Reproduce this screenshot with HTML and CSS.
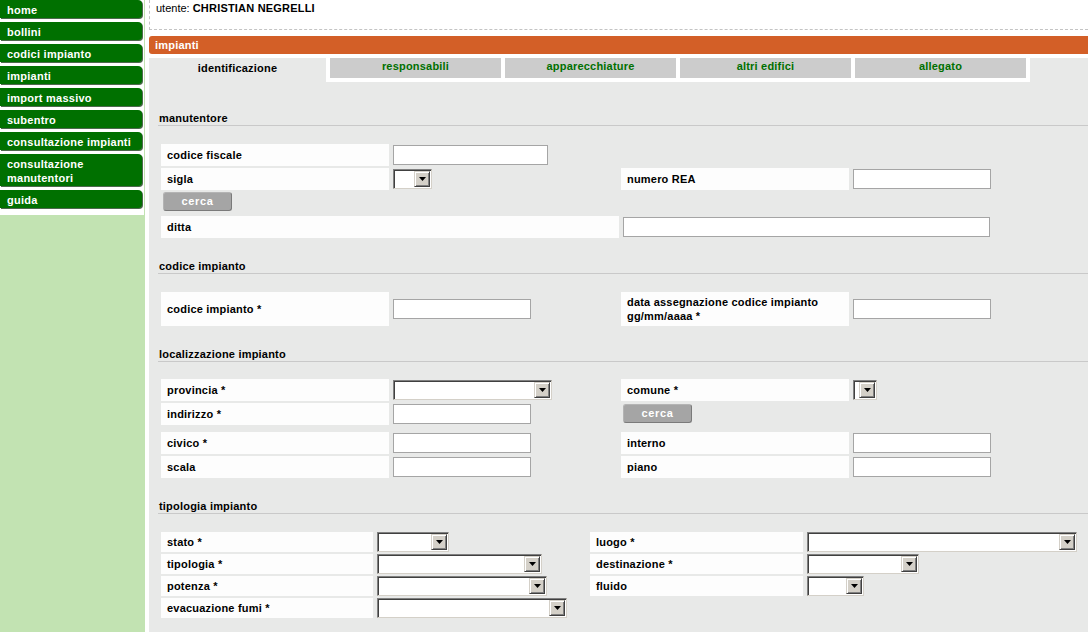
FILE: index.html
```html
<!DOCTYPE html>
<html lang="it">
<head>
<meta charset="utf-8">
<title>impianti</title>
<link rel="stylesheet" href="styles.css">
</head>
<body>
<div class="page">
  <aside class="sidebar">
    <nav class="menu">
      <a class="menu-item" href="#">home</a>
      <a class="menu-item" href="#">bollini</a>
      <a class="menu-item" href="#">codici impianto</a>
      <a class="menu-item" href="#">impianti</a>
      <a class="menu-item" href="#">import massivo</a>
      <a class="menu-item" href="#">subentro</a>
      <a class="menu-item" href="#">consultazione impianti</a>
      <a class="menu-item" href="#">consultazione<br>manutentori</a>
      <a class="menu-item" href="#">guida</a>
    </nav>
  </aside>

  <main class="main">
    <div class="user">utente: <b>CHRISTIAN NEGRELLI</b></div>
    <div class="titlebar">impianti</div>
    <div class="tabbar">
      <div class="tabs">
        <div class="tab tab-active">identificazione</div>
        <div class="tab">responsabili</div>
        <div class="tab">apparecchiature</div>
        <div class="tab">altri edifici</div>
        <div class="tab">allegato</div>
      </div>
    </div>

    <div class="content">
      <section class="section">
        <h3 class="sec-title">manutentore</h3>
        <div class="grid">
          <div class="lbl">codice fiscale</div>
          <div class="val"><input class="field w155" type="text"></div>
          <div></div><div></div>

          <div class="lbl">sigla</div>
          <div class="val"><span class="sel w39"><span class="sel-btn"><svg width="7" height="4" viewBox="0 0 7 4"><polygon points="0,0 7,0 3.5,4" fill="#000"/></svg></span></span></div>
          <div class="lbl">numero REA</div>
          <div class="val"><input class="field w138" type="text"></div>

          <div class="val val-top"><button class="btn" type="button">cerca</button></div>
          <div></div><div></div><div></div>

          <div class="lbl span2">ditta</div>
          <div class="val span2"><input class="field w367" type="text"></div>
        </div>
      </section>

      <section class="section">
        <h3 class="sec-title">codice impianto</h3>
        <div class="grid">
          <div class="lbl lbl-tall">codice impianto *</div>
          <div class="val val-mid"><input class="field w138" type="text"></div>
          <div class="lbl lbl-tall">data assegnazione codice impianto<br>gg/mm/aaaa *</div>
          <div class="val val-mid"><input class="field w138" type="text"></div>
        </div>
      </section>

      <section class="section">
        <h3 class="sec-title sec-title-tight">localizzazione impianto</h3>
        <div class="grid">
          <div class="lbl">provincia *</div>
          <div class="val"><span class="sel w159"><span class="sel-btn"><svg width="7" height="4" viewBox="0 0 7 4"><polygon points="0,0 7,0 3.5,4" fill="#000"/></svg></span></span></div>
          <div class="lbl">comune *</div>
          <div class="val"><span class="sel w24"><span class="sel-btn"><svg width="7" height="4" viewBox="0 0 7 4"><polygon points="0,0 7,0 3.5,4" fill="#000"/></svg></span></span></div>

          <div class="lbl">indirizzo *</div>
          <div class="val"><input class="field w138" type="text"></div>
          <div class="val"><button class="btn" type="button">cerca</button></div>
          <div></div>
        </div>
        <div class="grid grid-next">
          <div class="lbl">civico *</div>
          <div class="val"><input class="field w138" type="text"></div>
          <div class="lbl">interno</div>
          <div class="val"><input class="field w138" type="text"></div>

          <div class="lbl">scala</div>
          <div class="val"><input class="field w138" type="text"></div>
          <div class="lbl">piano</div>
          <div class="val"><input class="field w138" type="text"></div>
        </div>
      </section>

      <section class="section">
        <h3 class="sec-title">tipologia impianto</h3>
        <div class="grid grid-tip">
          <div class="lbl">stato *</div>
          <div class="val"><span class="sel w72"><span class="sel-btn"><svg width="7" height="4" viewBox="0 0 7 4"><polygon points="0,0 7,0 3.5,4" fill="#000"/></svg></span></span></div>
          <div class="lbl">luogo *</div>
          <div class="val"><span class="sel w270"><span class="sel-btn"><svg width="7" height="4" viewBox="0 0 7 4"><polygon points="0,0 7,0 3.5,4" fill="#000"/></svg></span></span></div>

          <div class="lbl">tipologia *</div>
          <div class="val"><span class="sel w165"><span class="sel-btn"><svg width="7" height="4" viewBox="0 0 7 4"><polygon points="0,0 7,0 3.5,4" fill="#000"/></svg></span></span></div>
          <div class="lbl">destinazione *</div>
          <div class="val"><span class="sel w112"><span class="sel-btn"><svg width="7" height="4" viewBox="0 0 7 4"><polygon points="0,0 7,0 3.5,4" fill="#000"/></svg></span></span></div>

          <div class="lbl">potenza *</div>
          <div class="val"><span class="sel w170"><span class="sel-btn"><svg width="7" height="4" viewBox="0 0 7 4"><polygon points="0,0 7,0 3.5,4" fill="#000"/></svg></span></span></div>
          <div class="lbl">fluido</div>
          <div class="val"><span class="sel w57"><span class="sel-btn"><svg width="7" height="4" viewBox="0 0 7 4"><polygon points="0,0 7,0 3.5,4" fill="#000"/></svg></span></span></div>

          <div class="lbl">evacuazione fumi *</div>
          <div class="val"><span class="sel w190"><span class="sel-btn"><svg width="7" height="4" viewBox="0 0 7 4"><polygon points="0,0 7,0 3.5,4" fill="#000"/></svg></span></span></div>
          <div></div><div></div>
        </div>
      </section>
    </div>
  </main>
</div>
</body>
</html>
```

FILE: styles.css
```css
html, body {
  margin: 0;
  height: 100%;
  overflow: hidden;
}

body {
  background: #fff;
  color: #000;
  font-family: "Liberation Sans", Arial, sans-serif;
  font-size: 11px;
}

.page {
  display: flex;
  min-height: 100vh;
}

/* ---------- sidebar ---------- */
.sidebar {
  flex: none;
  width: 145px;
  background: #c2e3b2;
}

.menu {
  width: 144px;
  background: #fff;
  padding-bottom: 3px;
}

.menu-item {
  display: block;
  box-sizing: border-box;
  width: 142px;
  margin-bottom: 4px;
  padding: 3px 0 1px 7px;
  background: #007000;
  color: #fff;
  font-weight: bold;
  line-height: 14px;
  letter-spacing: 0.25px;
  text-decoration: none;
  border-radius: 0 4px 4px 0;
  box-shadow: 1px 1px 0 #4d684d;
}

/* ---------- main ---------- */
.main {
  flex: 1;
  min-width: 0;
  margin-left: 4px;
  display: flex;
  flex-direction: column;
}

.user {
  box-sizing: border-box;
  height: 30px;
  padding: 2px 0 0 6px;
  line-height: 13px;
  border-left: 1px dashed #c4c4c4;
  border-bottom: 1px dashed #c4c4c4;
}

.user b {
  letter-spacing: 0.2px;
}

.titlebar {
  margin-top: 6px;
  height: 18px;
  line-height: 18px;
  padding-left: 6px;
  background: #d35f27;
  color: #fff;
  font-weight: bold;
  letter-spacing: 0.2px;
  border-radius: 3px 0 0 3px;
}

.tabbar {
  display: flex;
  border-top: 4px solid #fff;
  background: #e8e9e8;
}

.tabs {
  display: flex;
  align-items: flex-start;
  gap: 4px;
  height: 24px;
  padding-right: 4px;
  background: #fff;
}

.tab {
  box-sizing: border-box;
  width: 171px;
  height: 20px;
  line-height: 16px;
  text-align: center;
  background: #cccccc;
  color: #007000;
  font-weight: bold;
  letter-spacing: 0.2px;
}

.tab-active {
  width: 177px;
  height: 24px;
  padding-top: 3px;
  line-height: 14px;
  background: #e8e9e8;
  color: #000;
}

.content {
  flex: 1;
  background: #e8e9e8;
  padding: 29px 0 14px 9px;
}

.section + .section {
  margin-top: 21px;
}

.sec-title {
  margin: 0 0 18px;
  padding-left: 1px;
  font-size: 11px;
  font-weight: bold;
  line-height: 14px;
  letter-spacing: 0.2px;
  border-bottom: 1px solid #c9c9c9;
}

.sec-title-tight {
  margin-bottom: 17px;
}

/* ---------- form grid ---------- */
.grid {
  display: grid;
  grid-template-columns: repeat(4, 228px);
  gap: 2px;
  margin-left: 3px;
}

.grid-next {
  margin-top: 7px;
}

.grid-tip {
  grid-template-columns: 212px 213px 213px 274px;
}

.span2 {
  grid-column: span 2;
}

.lbl {
  display: flex;
  align-items: center;
  box-sizing: border-box;
  min-height: 22px;
  padding: 0 6px;
  background: #fdfdfd;
  font-weight: bold;
  line-height: 14px;
  letter-spacing: 0.2px;
}

.lbl-tall {
  min-height: 34px;
  padding: 3px 6px;
}

.val {
  padding: 1px 2px;
}

.val-top {
  box-sizing: border-box;
  height: 22px;
  padding: 0 2px;
}

.val-mid {
  display: flex;
  align-items: center;
  padding: 0 2px;
}

.grid-tip .lbl {
  min-height: 20px;
}

.grid-tip .val {
  padding: 0 2px;
  height: 20px;
}

.field {
  display: block;
  box-sizing: border-box;
  height: 20px;
  margin: 0;
  padding: 0 2px;
  border: 1px solid #a5a5a5;
  background: #fff;
  font: 11px "Liberation Sans", Arial, sans-serif;
}

.w138 { width: 138px; }
.w155 { width: 155px; }
.w367 { width: 367px; }

/* select look-alike (classic windows combo) */
.sel {
  display: flex;
  justify-content: flex-end;
  align-items: center;
  box-sizing: border-box;
  height: 20px;
  padding: 1px;
  background: #fff;
  border: 1px solid;
  border-color: #808080 #d4d0c8 #d4d0c8 #808080;
  box-shadow: inset 1px 1px 0 #404040;
}

.sel-btn {
  display: flex;
  align-items: center;
  justify-content: center;
  box-sizing: border-box;
  width: 16px;
  height: 16px;
  background: #d4d0c8;
  border: 1px solid;
  border-color: #d4d0c8 #404040 #404040 #d4d0c8;
  box-shadow: inset 1px 1px 0 #fff, inset -1px -1px 0 #808080;
}

.w24 { width: 24px; }
.w39 { width: 39px; }
.w57 { width: 57px; }
.w72 { width: 72px; }
.w112 { width: 112px; }
.w159 { width: 159px; }
.w165 { width: 165px; }
.w170 { width: 170px; }
.w190 { width: 190px; }
.w270 { width: 270px; }

.btn {
  display: block;
  box-sizing: border-box;
  width: 69px;
  height: 19px;
  margin: 0;
  padding: 0;
  background: #a5a5a5;
  color: #fff;
  font: bold 11px "Liberation Sans", Arial, sans-serif;
  letter-spacing: 0.6px;
  line-height: 17px;
  text-align: center;
  border: 1px solid;
  border-color: #b4b4b4 #7a7a7a #7a7a7a #b4b4b4;
  border-radius: 3px;
}
```
